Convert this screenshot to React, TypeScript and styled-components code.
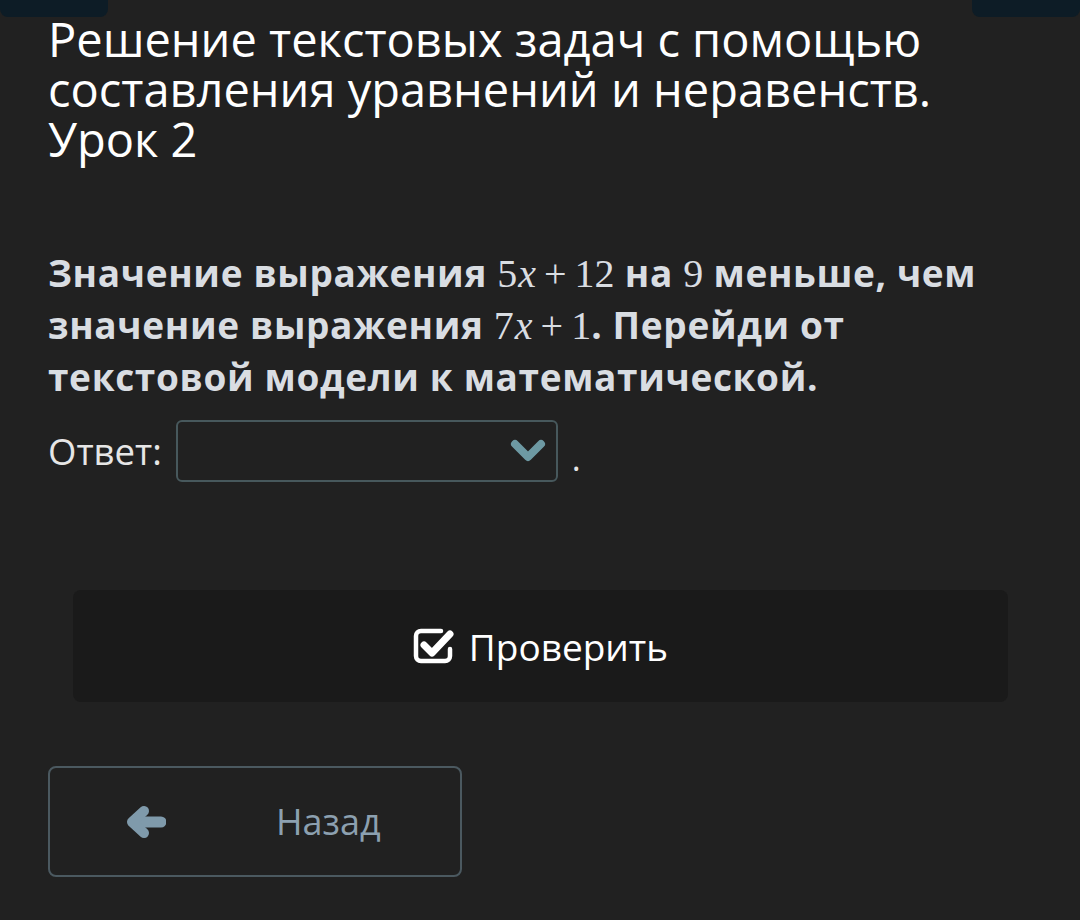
import React from 'react';
import styled, {createGlobalStyle} from "styled-components";

const GlobalStyle = createGlobalStyle`
    html, body {
        margin: 0;
        padding: 0;
        background: #212121;
    }
    body {
        font-family: "Open Sans", "Noto Sans", sans-serif;
    }
`

const CheckIcon = () => (
    <svg width="42" height="38" viewBox="0 0 42 38">
        <path d="M28 4 H8 a5 5 0 0 0 -5 5 V29 a5 5 0 0 0 5 5 H32 a5 5 0 0 0 5 -5 V22"
              fill="none" stroke="#fff" strokeWidth="4.5" strokeLinecap="round"/>
        <path d="M11 18 L19 26 L37 7" fill="none" stroke="#fff" strokeWidth="7"
              strokeLinecap="round" strokeLinejoin="round"/>
    </svg>
);

const Chevron = () => (
    <svg width="36" height="24" viewBox="0 0 36 24">
        <path d="M5 5 L18 18 L31 5" fill="none" stroke="currentColor" strokeWidth="8"
              strokeLinecap="round" strokeLinejoin="round"/>
    </svg>
);

const ArrowLeft = () => (
    <svg width="40" height="34" viewBox="0 0 40 34">
        <path d="M35 17 H8" fill="none" stroke="currentColor" strokeWidth="11" strokeLinecap="round"/>
        <path d="M18 6 L6 17 L18 28" fill="none" stroke="currentColor" strokeWidth="10"
              strokeLinecap="round" strokeLinejoin="round"/>
    </svg>
);

export default function App() {
    return (
        <Page>
            <GlobalStyle/>
            <TopBar>
                <Tab/>
                <Tab/>
            </TopBar>
            <Container>
                <Title>Решение текстовых задач с помощью составления уравнений и неравенств. Урок 2</Title>

                <Question>
                    Значение выражения <Math>5<i>x</i><Op>+</Op>12</Math> на <Math>9</Math> меньше, чем
                    значение выражения <Math>7<i>x</i><Op>+</Op>1</Math>. Перейди от
                    текстовой модели к математической.
                </Question>

                <AnswerRow>
                    <Label>Ответ:</Label>
                    <Select>
                        <Chevron/>
                    </Select>
                    <Dot>.</Dot>
                </AnswerRow>

                <CheckButton>
                    <CheckIcon/>
                    Проверить
                </CheckButton>

                <BackButton>
                    <ArrowLeft/>
                    <BackText>Назад</BackText>
                </BackButton>
            </Container>
        </Page>
    );
}

const Page = styled.div`
    width: 1080px;
    height: 920px;
    background: #212121;
    overflow: hidden;
`

const TopBar = styled.div`
    display: flex;
    justify-content: space-between;
    height: 17px;
`

const Tab = styled.div`
    width: 108px;
    height: 17px;
    background: #0d1c26;
    border-radius: 0 0 8px 8px;
`

const Container = styled.div`
    padding: 0 48px;
    margin-top: -3px;
`

const Title = styled.h1`
    margin: 0;
    font-size: 47px;
    line-height: 50px;
    font-weight: 400;
    color: #ffffff;
`

const Question = styled.p`
    margin: 83px 0 0;
    font-size: 37px;
    line-height: 51px;
    font-weight: 700;
    letter-spacing: 0.65px;
    color: #d9dde2;
`

const Math = styled.span`
    font-family: "Liberation Serif", "DejaVu Serif", serif;
    font-weight: 400;
    font-size: 40px;
    letter-spacing: 0;

    i {
        font-style: italic;
        margin-left: 1px;
    }
`

const Op = styled.span`
    margin: 0 8px;
`

const AnswerRow = styled.div`
    display: flex;
    align-items: center;
    margin-top: 18px;
`

const Label = styled.span`
    font-size: 36.5px;
    color: #e6e6e6;
    margin-right: 14px;
`

const Select = styled.div`
    width: 368px;
    height: 58px;
    border: 2px solid #47585c;
    border-radius: 6px;
    display: flex;
    justify-content: flex-end;
    align-items: center;
    padding-right: 10px;
    color: #6d99a3;
`

const Dot = styled.span`
    font-size: 34px;
    color: #e6e6e6;
    margin-left: 14px;
    margin-top: 14px;
`

const CheckButton = styled.div`
    margin: 108px 24px 0 25px;
    height: 112px;
    background: #1a1a1a;
    border-radius: 8px;
    display: flex;
    align-items: center;
    justify-content: center;
    gap: 14px;
    font-size: 37px;
    color: #ffffff;
`

const BackButton = styled.div`
    margin-top: 64px;
    width: 414px;
    height: 111px;
    border: 2px solid #4b5960;
    border-radius: 8px;
    display: flex;
    align-items: center;
    color: #7f9aab;
    padding-left: 76px;
    box-sizing: border-box;
`

const BackText = styled.span`
    font-size: 36px;
    color: #8ca0b0;
    margin-left: 110px;
`
